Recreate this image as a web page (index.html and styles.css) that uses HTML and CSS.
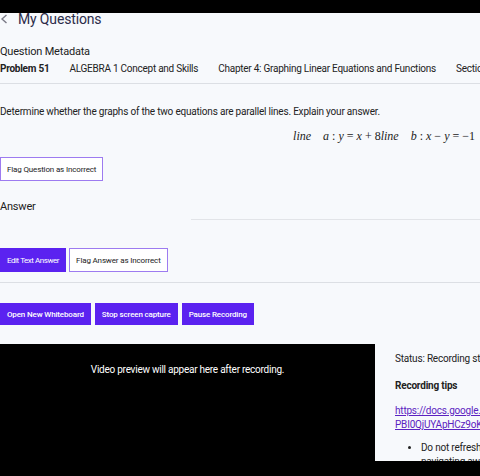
FILE: index.html
```html
<!DOCTYPE html>
<html>
<head>
<meta charset="utf-8">
<link rel="stylesheet" href="styles.css">
</head>
<body>
<div class="topbar"></div>
<div class="page">
  <div class="header">
    <svg class="chev" width="8" height="10" viewBox="0 0 8 10"><path d="M6.5 1 L2 5 L6.5 9" fill="none" stroke="#7a7a86" stroke-width="1.4"/></svg>
    <span class="title">My Questions</span>
  </div>
  <div class="meta-title">Question Metadata</div>
  <div class="meta-row">
    <span class="bold">Problem 51</span>
    <span>ALGEBRA 1 Concept and Skills</span>
    <span>Chapter 4: Graphing Linear Equations and Functions</span>
    <span>Section 4.3 Parallel Lines</span>
  </div>
  <div class="rule"></div>
  <p class="question">Determine whether the graphs of the two equations are parallel lines. Explain your answer.</p>
  <div class="math"><i>line</i>&nbsp;&nbsp;&nbsp;&nbsp;<i>a</i> : <i>y</i> = <i>x</i> + 8<i>line</i>&nbsp;&nbsp;&nbsp;&nbsp;<i>b</i> : <i>x</i> &minus; <i>y</i> = &minus;1</div>
  <div class="row1"><button class="btn outline">Flag Question as Incorrect</button></div>
  <div class="answer-head">
    <span class="answer-title">Answer</span>
    <span class="answer-line"></span>
  </div>
  <div class="row2">
    <button class="btn solid tight">Edit Text Answer</button>
    <button class="btn outline">Flag Answer as Incorrect</button>
  </div>
  <div class="rule rule2"></div>
  <div class="row3">
    <button class="btn solid strong">Open New Whiteboard</button>
    <button class="btn solid strong">Stop screen capture</button>
    <button class="btn solid strong">Pause Recording</button>
  </div>
  <div class="rec">
    <div class="video"><span>Video preview will appear here after recording.</span></div>
    <div class="side">
      <div class="status">Status: Recording started</div>
      <div class="tips">Recording tips</div>
      <a class="link" href="#">https://docs.google.com/document/d/1<br>PBI0QjUYApHCz9oKx</a>
      <ul class="list"><li>Do not refresh the page or<br>navigating away</li></ul>
    </div>
  </div>
</div>
<div class="bottombar"></div>
</body>
</html>
```
FILE: styles.css
```css
html, body {
  margin: 0;
  padding: 0;
  background: #f7f9fc;
  overflow: hidden;
  width: 480px;
  height: 476px;
}
body {
  font-family: Roboto, "Liberation Sans", sans-serif;
  color: #222;
  font-size: 10px;
  letter-spacing: -0.2px;
}
.topbar {
  height: 13px;
  background: #000;
}
.page {
  width: 480px;
  overflow: hidden;
}
.header {
  display: flex;
  align-items: center;
  height: 12px;
  gap: 10px;
  font-size: 14px;
  color: #2c2c4a;
  line-height: 12px;
}
.chev {
  flex-shrink: 0;
}
.title {
  letter-spacing: -0.15px;
}
.meta-title {
  margin-top: 20px;
  font-size: 11px;
  line-height: 14px;
}
.meta-row {
  display: flex;
  gap: 20px;
  margin-top: 3px;
  white-space: nowrap;
  font-size: 10px;
  line-height: 14px;
  letter-spacing: -0.25px;
}
.bold {
  font-weight: 700;
}
.rule {
  height: 1px;
  background: #dcdfe4;
  margin-top: 7px;
}
.question {
  margin: 21px 0 0;
  font-size: 10px;
  line-height: 14px;
}
.math {
  margin-top: 9px;
  text-align: right;
  padding-right: 5px;
  font-family: "Liberation Serif", serif;
  font-size: 12px;
  letter-spacing: 0;
  line-height: 16px;
  color: #222;
}
.row1 {
  margin-top: 13px;
}
.btn {
  font-family: Roboto, "Liberation Sans", sans-serif;
  font-size: 8px;
  letter-spacing: -0.15px;
  height: 24px;
  padding: 0 6px;
  margin: 0;
  border-radius: 0;
  cursor: pointer;
}
.outline {
  background: #fff;
  color: #222;
  border: 1px solid #9d7bf0;
}
.solid {
  background: #5b22f0;
  color: #fff;
  border: 1px solid #5b22f0;
}
.tight {
  letter-spacing: -0.45px;
}
.strong {
  font-weight: 500;
  font-size: 8px;
  letter-spacing: -0.15px;
  padding: 0 6px;
}
.answer-head {
  display: flex;
  align-items: flex-end;
  margin-top: 19px;
}
.answer-title {
  font-size: 11px;
  line-height: 14px;
}
.answer-line {
  flex: 1;
  height: 1px;
  background: #e2e4e8;
  margin-left: 155px;
  margin-bottom: -6px;
}
.row2 {
  display: flex;
  gap: 3px;
  margin-top: 34px;
}
.rule2 {
  margin-top: 10px;
}
.row3 {
  display: flex;
  gap: 4px;
  margin-top: 20px;
}
.row3 .btn {
  height: 22px;
}
.rec {
  display: flex;
  margin-top: 19px;
}
.video {
  width: 375px;
  height: 132px;
  background: #000;
  color: #fff;
  display: flex;
  justify-content: center;
  padding-top: 20px;
  box-sizing: border-box;
  font-size: 10px;
  letter-spacing: -0.25px;
  flex-shrink: 0;
}
.side {
  padding-left: 20px;
  font-size: 10px;
  white-space: nowrap;
  line-height: 14px;
}
.status {
  margin-top: 8px;
}
.tips {
  margin-top: 13px;
  font-weight: 700;
}
.link {
  display: block;
  margin-top: 11px;
  color: #5b22c0;
  text-decoration: underline;
}
.list {
  margin: 9px 0 0;
  padding-left: 26px;
}
.bottombar {
  position: fixed;
  left: 0;
  right: 0;
  bottom: 0;
  height: 15px;
  background: #000;
}
```
